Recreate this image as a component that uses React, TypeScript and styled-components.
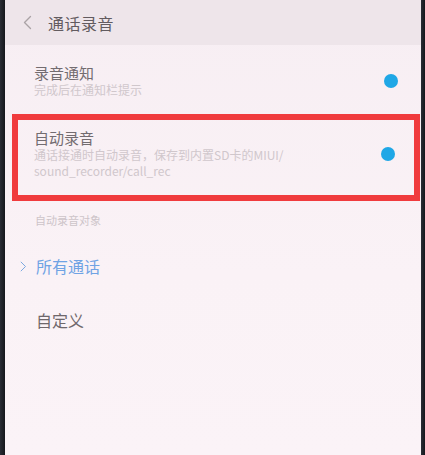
import styled, { createGlobalStyle } from 'styled-components';

const Global = createGlobalStyle`
  html, body {
    margin: 0;
    padding: 0;
    background: #1c1e24;
  }
  #root {
    width: 425px;
    height: 455px;
  }
`;

const Frame = styled.div`
  display: flex;
  width: 425px;
  height: 455px;
  background: #22252c;
  font-family: 'Noto Sans CJK SC', 'Noto Sans', sans-serif;
`;

const Bezel = styled.div<{ $w: number }>`
  width: ${(p) => p.$w}px;
  flex: none;
  background: linear-gradient(90deg, #2a2d35, #15171c);
`;

const Screen = styled.div`
  flex: 1;
  display: flex;
  flex-direction: column;
  background: linear-gradient(180deg, #f7eef3 0%, #faf2f6 60%, #fbf3f7 100%);
  overflow: hidden;
`;

const Header = styled.div`
  height: 45px;
  display: flex;
  align-items: center;
  gap: 16px;
  padding-left: 18px;
  background: #eee5ea;
  flex: none;
`;

const Title = styled.div`
  font-size: 16px;
  color: #625b5f;
  letter-spacing: 0.5px;
`;

const Row = styled.div<{ $h: number }>`
  height: ${(p) => p.$h}px;
  display: flex;
  align-items: center;
  padding: 4px 23px 0 29px;
  box-sizing: border-box;
  flex: none;
`;

const Highlight = styled.div`
  margin: 2px 1px 0 7px;
  border: 6px solid #f03b3d;
  display: flex;
  align-items: center;
  padding: 8px 19px 16px 16px;
  flex: none;
`;

const Texts = styled.div`
  flex: 1;
  min-width: 0;
`;

const ItemTitle = styled.div`
  font-size: 15px;
  line-height: 19px;
  color: #736c70;
`;

const ItemSub = styled.div`
  font-size: 12px;
  line-height: 16px;
  color: #d0c7cc;
`;

const Dot = styled.div`
  width: 14px;
  height: 14px;
  border-radius: 50%;
  background: #1fa7e6;
  flex: none;
`;

const SectionLabel = styled.div`
  height: 38px;
  display: flex;
  align-items: center;
  padding-left: 30px;
  font-size: 11px;
  color: #cdc4c9;
  flex: none;
`;

const Option = styled.div<{ $active?: boolean }>`
  height: 54px;
  display: flex;
  align-items: center;
  gap: 9px;
  padding-left: 15px;
  font-size: 16px;
  color: ${(p) => (p.$active ? '#6fa3e4' : '#6e676b')};
  flex: none;
`;

const Mark = styled.div`
  width: 7px;
  display: flex;
  align-items: center;
  flex: none;
`;

function Chevron({ dir, color, size }: { dir: 'left' | 'right'; color: string; size: number }) {
  return (
    <svg width={size * 0.6} height={size} viewBox="0 0 6 10" fill="none">
      <path
        d={dir === 'left' ? 'M5 1 L1 5 L5 9' : 'M1 1 L5 5 L1 9'}
        stroke={color}
        strokeWidth="0.9"
        strokeLinecap="round"
        strokeLinejoin="round"
      />
    </svg>
  );
}

export default function App() {
  return (
    <>
      <Global />
      <Frame>
        <Bezel $w={5} />
        <Screen>
          <Header>
            <Chevron dir="left" color="#aaa2a6" size={15} />
            <Title>通话录音</Title>
          </Header>
          <Row $h={67}>
            <Texts>
              <ItemTitle>录音通知</ItemTitle>
              <ItemSub>完成后在通知栏提示</ItemSub>
            </Texts>
            <Dot />
          </Row>
          <Highlight>
            <Texts>
              <ItemTitle>自动录音</ItemTitle>
              <ItemSub>
                通话接通时自动录音，保存到内置SD卡的MIUI/
                <br />
                sound_recorder/call_rec
              </ItemSub>
            </Texts>
            <Dot />
          </Highlight>
          <SectionLabel>自动录音对象</SectionLabel>
          <Option $active>
            <Mark>
              <Chevron dir="right" color="#7aa8e0" size={11} />
            </Mark>
            <span>所有通话</span>
          </Option>
          <Option>
            <Mark />
            <span>自定义</span>
          </Option>
        </Screen>
        <Bezel $w={4} />
      </Frame>
    </>
  );
}
